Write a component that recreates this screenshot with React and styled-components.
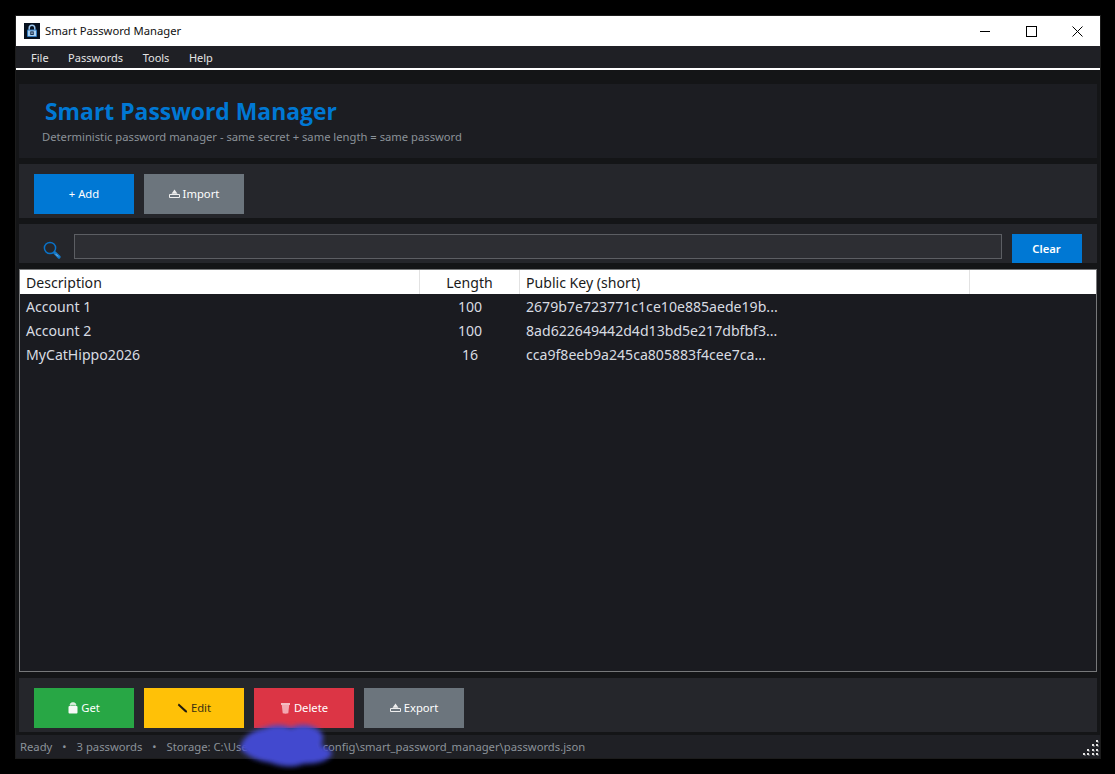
import React from "react";
import styled, { createGlobalStyle } from "styled-components";

const Global = createGlobalStyle`
  html, body { margin: 0; padding: 0; background: #000; }
  body { font-family: "Noto Sans", "Open Sans", "Liberation Sans", sans-serif; }
  * { box-sizing: border-box; }
`;
const Page = styled.div`
  width: 1115px; height: 774px; padding: 16px 0 0 16px; background: #000; overflow: hidden;
`;
const Win = styled.div`
  position: relative; width: 1084px; height: 742px; display: flex; flex-direction: column;
  background: #141517; outline: 1px solid #1c1c1c;
`;
const TitleBar = styled.div`
  height: 30px; background: #fff; display: flex; align-items: center; padding-left: 8px; color: #111; font-size: 11.25px;
`;
const TitleText = styled.span` margin-left: 5px; flex: 1; padding-bottom: 1px; `;
const WinBtn = styled.div` width: 46px; height: 30px; display: flex; align-items: center; justify-content: center; `;
const MenuBar = styled.div`
  height: 24px; background: #1f2025; border-bottom: 2px solid #fff; display: flex; align-items: center; padding: 0 0 0 15px; gap: 19.5px; color: #e4e4e4; font-size: 11px;
`;
const Content = styled.div`
  flex: 1; display: flex; flex-direction: column; padding: 14px 3px 0 3px; min-height: 0;
`;
const Header = styled.div`
  height: 74px; background: #1c1d22; padding: 12px 0 0 23px; margin-bottom: 6px;
`;
const Title = styled.div`
  font-size: 22.9px; font-weight: 700; line-height: 32px; color: #0078d4; margin-left: 3px; font-family: "Open Sans", sans-serif;
`;
const Sub = styled.div` font-size: 11.23px; line-height: 18px; color: #8b9299; `;
const ButtonPanel = styled.div`
  height: 54px; background: #25262b; padding: 10px 15px; display: flex; gap: 10px;
`;
const Btn = styled.div`
  width: 100px; height: 40px; background: ${p => p.$bg}; color: ${p => p.$fg || "#fff"};
  display: flex; align-items: center; justify-content: center; gap: 3px; font-size: 11.25px; font-weight: 400; padding-bottom: 1px;
`;
const SearchPanel = styled.div`
  height: 39px; margin-top: 6px; background: #25262b; padding: 10px 15px 0 24px; display: flex;
`;
const SearchIcon = styled.div` width: 31px; padding-top: 7px; `;
const SearchInput = styled.div`
  width: 928px; height: 25px; background: #2d2e33; border: 1px solid #5c5e63;
`;
const Clear = styled.div`
  width: 70px; height: 29px; margin-left: 10px; background: #0078d4; color: #fff; font-size: 11.25px; font-weight: 600;
  display: flex; align-items: center; justify-content: center; padding-right: 1px;
`;
const Table = styled.div`
  height: 403px; margin-top: 6px; background: #1a1b20; border: 1px solid #77787a; display: flex; flex-direction: column;
`;
const Row = styled.div`
  display: grid; grid-template-columns: 400px 100px 450px 1fr; height: 24px; align-items: center;
  font-size: 14.1px; color: ${p => p.$head ? "#1a1a1a" : "#d8dce2"}; background: ${p => p.$head ? "#fff" : "transparent"};
`;
const Cell = styled.div`
  height: 100%; display: flex; align-items: center; padding: 0 6px; white-space: nowrap; overflow: hidden;
  justify-content: ${p => p.$center ? "center" : "flex-start"};
  border-right: ${p => p.$head ? "1px solid #e2e2e2" : "none"};
`;
const BottomPanel = styled(ButtonPanel)` margin-top: 6px; `;
const Status = styled.div`
  position: relative; margin-top: 3px; height: 23px; margin-left: -3px; margin-right: -3px; background: #1f2025; color: #8b9299; font-size: 11.25px;
  display: flex; align-items: center; padding-left: 4px; padding-bottom: 1px;
`;
const Dot = styled.span` margin: 0 10px; `;
const Grip = styled.svg` position: absolute; right: 0; bottom: 1px; `;
const Blob = styled.svg` position: absolute; left: 221px; top: 705px; pointer-events: none; `;

const Min = () => <svg width="10" height="10"><path d="M0 5.5H10" stroke="#000" /></svg>;
const Max = () => <svg width="11" height="11"><rect x=".5" y=".5" width="10" height="10" fill="none" stroke="#000" /></svg>;
const Close = () => <svg width="11" height="11"><path d="M.5.5l10 10M10.500.5l-10 10" stroke="#000" /></svg>;
const Logo = () => (
  <svg width="16" height="16" viewBox="0 0 16 16">
    <rect width="16" height="16" fill="#07111f" />
    <path d="M5.200 7V5a2.800 2.800 0 0 1 5.600 0v2" fill="none" stroke="#9cc6ee" strokeWidth="1.500" />
    <rect x="3" y="6.500" width="10" height="7.500" rx="1" fill="#2f78bd" />
    <rect x="4" y="7.500" width="8" height="5.500" fill="#a9d0f2" />
    <rect x="6.300" y="8.400" width="3.400" height="3.600" fill="#10294a" />
    <rect x="7.500" y="9.300" width="1" height="1.800" fill="#d6e9fa" />
  </svg>
);
const Magnifier = () => (
  <svg width="18" height="18" viewBox="0 0 18 18">
    <circle cx="7" cy="7" r="5.600" fill="none" stroke="#0a72c8" strokeWidth="1.500" />
    <path d="M11.800 11.800L16 16" stroke="#1479c9" strokeWidth="3.200" strokeLinecap="round" />
    <path d="M12.800 13.200L15 15.400" stroke="#a9cbe6" strokeWidth=".9" />
  </svg>
);
const Tray = ({ c = "#eeeeee" }) => (
  <svg width="11" height="9" viewBox="0 0 11 9">
    <path d="M.5 5.500h10v3H.5z" fill="none" stroke={c} />
    <path d="M5.500 .5L8.500 4.800H2.500z" fill={c} />
  </svg>
);
const Bag = () => (
  <svg width="10" height="12" viewBox="0 0 10 12">
    <path d="M2.300 3.500V2.400Q2.300 .8 5 .8T7.700 2.400V3.500" fill="#cfe8d4" stroke="#f2f2f2" />
    <rect x=".5" y="4" width="9" height="7.500" rx="1" fill="#f6f8f6" />
  </svg>
);
const Pencil = () => (
  <svg width="11" height="10" viewBox="0 0 11 10">
    <path d="M1.800 .6L.8 2.200L8.300 9.200L10.200 9.500L9.800 7.800Z" fill="#1e1a10" />
  </svg>
);
const Trash = () => (
  <svg width="11" height="12" viewBox="0 0 11 12">
    <path d="M1 2h9" stroke="#fde9eb" strokeWidth="1.500" />
    <path d="M1.800 3h7.400L8.300 11.300Q5.500 12 2.700 11.300z" fill="#f3a7b0" />
  </svg>
);
const gripPos = [1, 5, 10, 14];
const gripDots = [[3,0],[2,1],[3,1],[1,2],[2,2],[3,2],[0,3],[1,3],[2,3],[3,3]];
const GripDots = () => (
  <Grip width="18" height="18" viewBox="0 0 18 18">
    {gripDots.map(([c, r]) => (
      <g key={`${c}-${r}`}>
        <rect x={gripPos[c] + 1} y={gripPos[r] + 1} width="2" height="2" fill="#56585c" />
        <rect x={gripPos[c]} y={gripPos[r]} width="2" height="2" fill="#e4e4e4" />
      </g>
    ))}
  </Grip>
);

const rows = [
  ["Account 1", "100", "2679b7e723771c1ce10e885aede19b..."],
  ["Account 2", "100", "8ad622649442d4d13bd5e217dbfbf3..."],
  ["MyCatHippo2026", "16", "cca9f8eeb9a245ca805883f4cee7ca..."],
];

export default function App() {
  return (
    <Page>
      <Global />
      <Win>
        <TitleBar>
          <Logo />
          <TitleText>Smart Password Manager</TitleText>
          <WinBtn><Min /></WinBtn>
          <WinBtn><Max /></WinBtn>
          <WinBtn><Close /></WinBtn>
        </TitleBar>
        <MenuBar>
          <span>File</span><span>Passwords</span><span>Tools</span><span>Help</span>
        </MenuBar>
        <Content>
          <Header>
            <Title>Smart Password Manager</Title>
            <Sub>Deterministic password manager - same secret + same length = same password</Sub>
          </Header>
          <ButtonPanel>
            <Btn $bg="#0078d4">+ Add</Btn>
            <Btn $bg="#6c757d"><Tray />Import</Btn>
          </ButtonPanel>
          <SearchPanel>
            <SearchIcon><Magnifier /></SearchIcon>
            <SearchInput />
            <Clear>Clear</Clear>
          </SearchPanel>
          <Table>
            <Row $head>
              <Cell $head>Description</Cell>
              <Cell $head $center>Length</Cell>
              <Cell $head>Public Key (short)</Cell>
              <Cell />
            </Row>
            {rows.map(r => (
              <Row key={r[0]}>
                <Cell>{r[0]}</Cell>
                <Cell $center>{r[1]}</Cell>
                <Cell>{r[2]}</Cell>
                <Cell />
              </Row>
            ))}
          </Table>
          <BottomPanel>
            <Btn $bg="#28a745"><Bag />Get</Btn>
            <Btn $bg="#ffc107" $fg="#3a3012"><Pencil />Edit</Btn>
            <Btn $bg="#dc3545"><Trash />Delete</Btn>
            <Btn $bg="#6c757d"><Tray />Export</Btn>
          </BottomPanel>
          <Status>
            Ready<Dot>•</Dot>3 passwords<Dot>•</Dot>Storage: C:\Users\username\.config\smart_password_manager\passwords.json
            <GripDots />
          </Status>
        </Content>
        <Blob width="110" height="50" viewBox="0 0 110 50">
          <defs><filter id="b"><feGaussianBlur stdDeviation="2.500" /></filter></defs>
          <path d="M3 26C6 15 16 9 28 7C38 3 48 4 54 7C64 2 74 4 82 9C88 14 86 20 84 24C88 27 96 28 95 33C92 40 80 43 66 43C56 47 44 46 34 42C20 40 6 34 3 26Z" fill="#4249cf" filter="url(#b)" />
        </Blob>
      </Win>
    </Page>
  );
}
